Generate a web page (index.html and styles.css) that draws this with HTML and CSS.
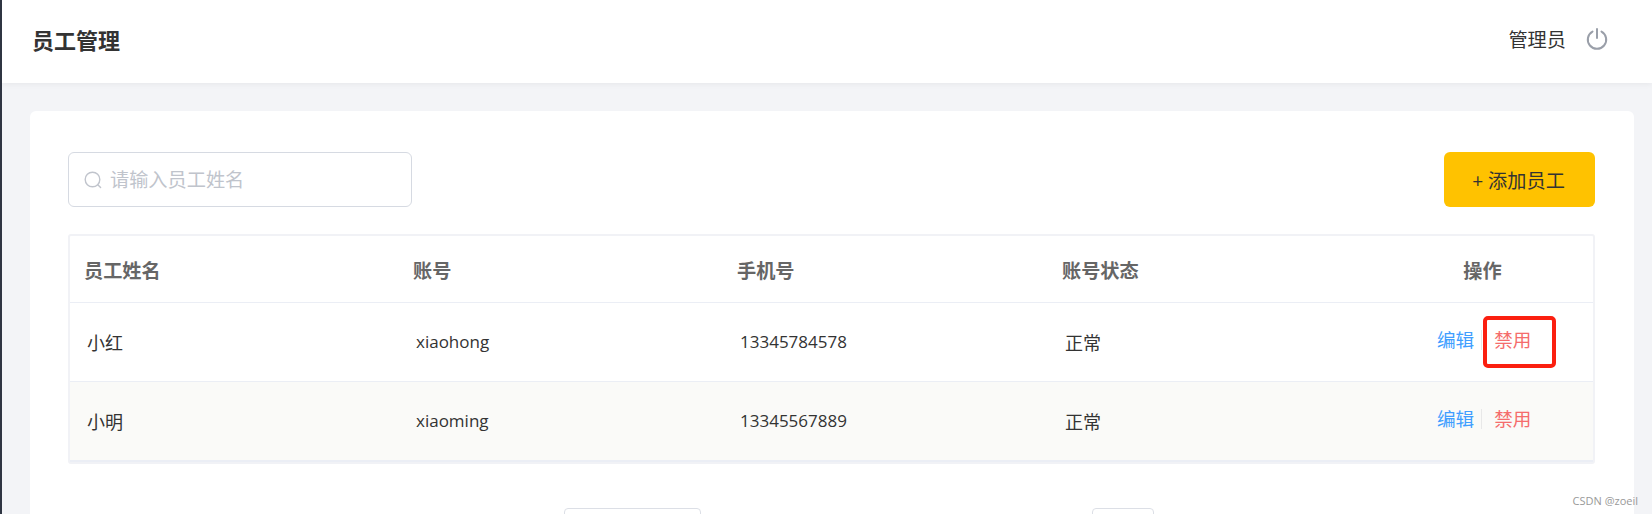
FILE: index.html
```html
<!DOCTYPE html>
<html>
<head>
    <title>员工管理</title>
    <link rel="stylesheet" href="styles.css">
</head>
<body>
    <div class="app">
        <div class="header">
            <h1>员工管理</h1>
            <div class="user">
                <span>管理员</span>
                <svg class="power" viewBox="0 0 22 22" fill="none" stroke="#9a9fa9" stroke-width="2" stroke-linecap="round">
                    <path d="M6.5 3.6a9.2 9.2 0 1 0 9 0"/>
                    <path d="M11 1v9"/>
                </svg>
            </div>
        </div>
        <div class="main">
            <div class="card">
                <div class="toolbar">
                    <div class="search">
                        <svg class="search-icon" viewBox="0 0 18 18" fill="none" stroke="#c0c4cc" stroke-width="1.4" stroke-linecap="round">
                            <circle cx="8.5" cy="8.5" r="7.3"/>
                            <path d="M14 14l2.6 2.6"/>
                        </svg>
                        <span>请输入员工姓名</span>
                    </div>
                    <button class="add">+ 添加员工</button>
                </div>
                <div class="table-wrap">
                    <table>
                        <colgroup>
                            <col class="c1"><col class="c2"><col class="c3"><col class="c4"><col>
                        </colgroup>
                        <thead>
                            <tr>
                                <th>员工姓名</th>
                                <th>账号</th>
                                <th>手机号</th>
                                <th>账号状态</th>
                                <th class="center">操作</th>
                            </tr>
                        </thead>
                        <tbody>
                            <tr>
                                <td>小红</td>
                                <td class="latin">xiaohong</td>
                                <td class="latin">13345784578</td>
                                <td>正常</td>
                                <td>
                                    <div class="ops">
                                        <a class="edit">编辑</a><a class="ban">禁用</a>
                                        <div class="mark"></div>
                                    </div>
                                </td>
                            </tr>
                            <tr class="stripe">
                                <td>小明</td>
                                <td class="latin">xiaoming</td>
                                <td class="latin">13345567889</td>
                                <td>正常</td>
                                <td>
                                    <div class="ops">
                                        <a class="edit">编辑</a><a class="ban">禁用</a>
                                    </div>
                                </td>
                            </tr>
                        </tbody>
                    </table>
                </div>
                <div class="pager">
                    <div class="pager-select"></div>
                    <div class="pager-jump"></div>
                </div>
            </div>
        </div>
        <div class="watermark">CSDN @zoeil</div>
    </div>
</body>
</html>
```

FILE: styles.css
```css
* {
    box-sizing: border-box;
}
html, body {
    margin: 0;
    height: 514px;
    overflow: hidden;
}
body {
    font-family: "Open Sans", "Noto Sans CJK SC", sans-serif;
    background-color: #f3f4f7;
    color: #333;
}
.app {
    position: relative;
    height: 514px;
    overflow: hidden;
    border-left: 2px solid #2f3542;
}
.header {
    height: 83px;
    background: white;
    box-shadow: 0 1px 6px rgba(0,0,0,0.06);
    display: flex;
    align-items: center;
    justify-content: space-between;
    padding: 0 44px 5px 30px;
    position: relative;
}
.header h1 {
    margin: 0;
    font-size: 22px;
    font-weight: bold;
    color: #333;
}
.user {
    display: flex;
    align-items: center;
    gap: 20px;
    font-size: 19.2px;
}
.power {
    width: 22px;
    height: 22px;
}
.main {
    padding: 28px 18px 0 28px;
}
.card {
    background: white;
    border-radius: 6px;
    padding: 41px 39px 0 38px;
    height: 500px;
}
.toolbar {
    display: flex;
    justify-content: space-between;
    margin-bottom: 27px;
}
.search {
    width: 344px;
    height: 55px;
    border: 1px solid #d6dae2;
    border-radius: 6px;
    display: flex;
    align-items: center;
    gap: 8px;
    padding: 0 0 2px 15px;
    font-size: 19.2px;
    color: #c0c4cc;
}
.search-icon {
    width: 18px;
    height: 18px;
    margin-top: 2px;
}
.add {
    width: 151px;
    height: 55px;
    background-color: #ffc200;
    border: none;
    border-radius: 6px;
    font-family: inherit;
    font-size: 19.2px;
    color: #333;
    padding: 0 2px 0 0;
}
.table-wrap {
    border: 2px solid #f1f2f6;
    border-radius: 3px;
}
table {
    width: 100%;
    border-collapse: collapse;
    table-layout: fixed;
}
.c1 {
    width: 328px;
}
.c2 {
    width: 324px;
}
.c3 {
    width: 325px;
}
.c4 {
    width: 325px;
}
th {
    height: 66px;
    padding: 2px 0 0 15px;
    text-align: left;
    font-size: 19.2px;
    font-weight: bold;
    color: #666;
    border-bottom: 1px solid #ebeef5;
}
th:first-child {
    padding-left: 14px;
}
th.center {
    text-align: center;
    padding: 2px 0 0;
}
td {
    height: 79px;
    padding: 0 0 0 18px;
    font-size: 18px;
    color: #333;
    border-bottom: 1px solid #ebeef5;
}
td:first-child {
    padding-left: 17px;
}
td.latin {
    font-size: 17px;
}
.stripe td {
    height: 80px;
    background-color: #fafaf8;
    border-bottom: 2px solid #ebeef5;
}
.ops {
    position: relative;
    display: flex;
    align-items: center;
    margin: -3px 0 0 -1px;
    padding-left: 48px;
    font-size: 18.6px;
}
.edit {
    color: #409eff;
    padding-right: 7px;
    border-right: 1px solid #e8e8e8;
    line-height: 20px;
}
.ban {
    color: #f56c6c;
    padding-left: 12px;
    line-height: 20px;
}
.mark {
    position: absolute;
    left: 94px;
    top: -14px;
    width: 73px;
    height: 52px;
    border: 4px solid #fb1f10;
    border-radius: 5px;
}
.pager {
    display: flex;
    margin-top: 44px;
    padding-left: 496px;
}
.pager-select {
    width: 137px;
    height: 40px;
    border: 1px solid #dcdfe6;
    border-radius: 4px;
}
.pager-jump {
    width: 62px;
    height: 40px;
    margin-left: 391px;
    border: 1px solid #dcdfe6;
    border-radius: 4px;
}
.watermark {
    position: absolute;
    right: 14px;
    bottom: 6px;
    font-size: 11px;
    color: #999;
}
```
